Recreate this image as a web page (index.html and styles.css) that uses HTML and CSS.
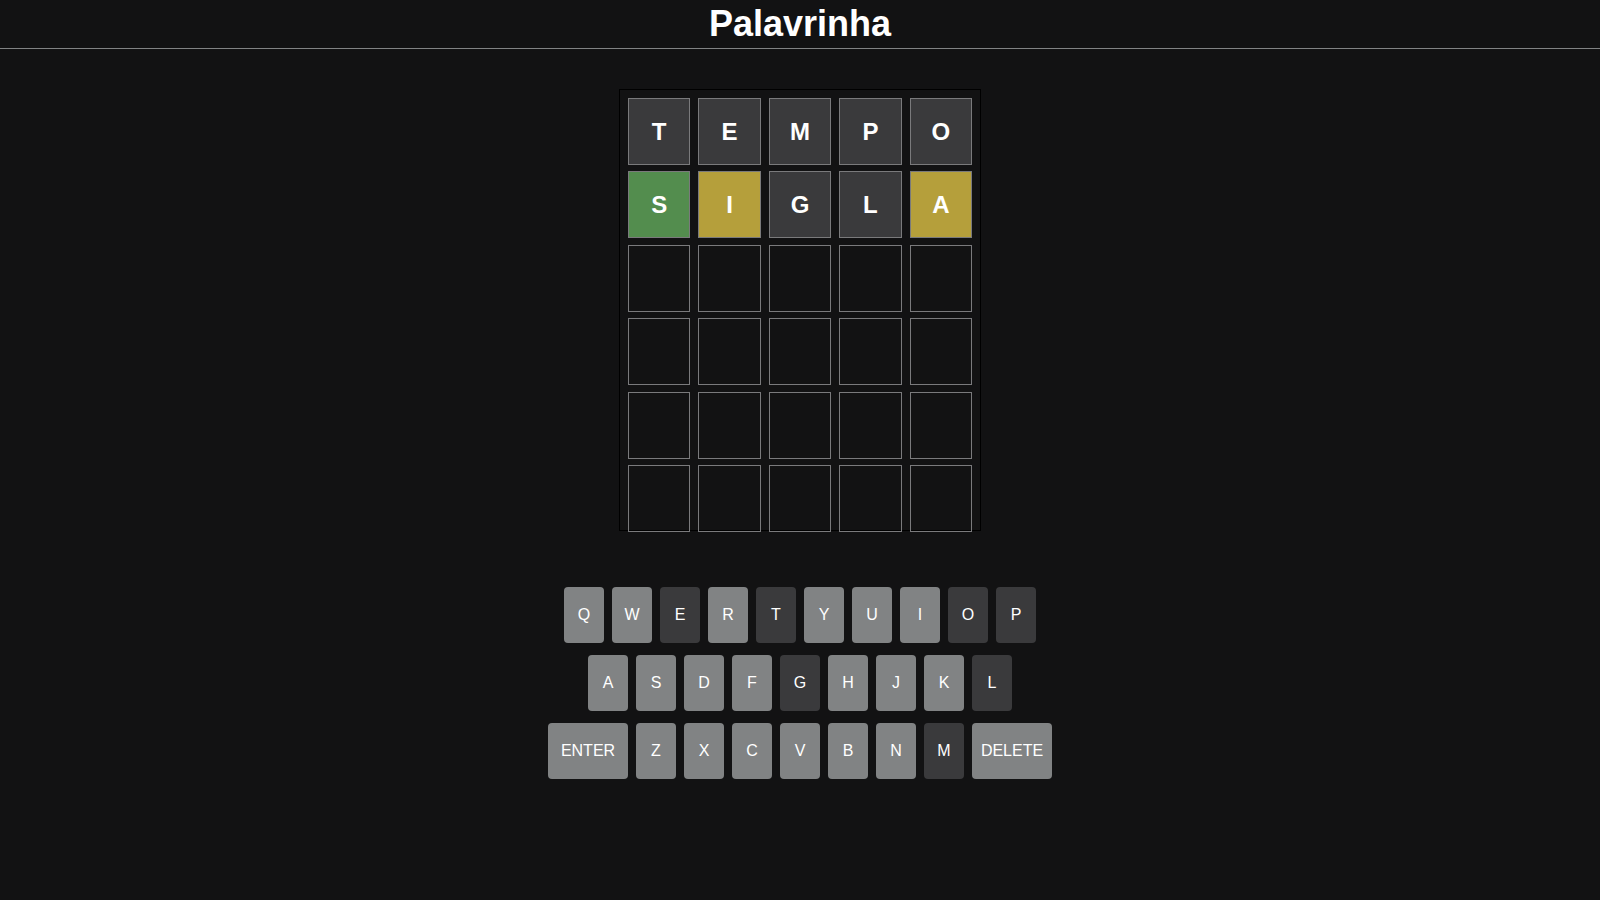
FILE: index.html
```html
<!DOCTYPE html>
<html lang="pt">
<head>
<meta charset="utf-8">
<title>Palavrinha</title>
<link rel="stylesheet" href="styles.css">
</head>
<body>
<header class="header"><h1 class="title">Palavrinha</h1></header>
<main class="main">
  <div class="board">
    <div class="tile dark">T</div><div class="tile dark">E</div><div class="tile dark">M</div><div class="tile dark">P</div><div class="tile dark">O</div>
    <div class="tile green">S</div><div class="tile yellow">I</div><div class="tile dark">G</div><div class="tile dark">L</div><div class="tile yellow">A</div>
    <div class="tile"></div><div class="tile"></div><div class="tile"></div><div class="tile"></div><div class="tile"></div>
    <div class="tile"></div><div class="tile"></div><div class="tile"></div><div class="tile"></div><div class="tile"></div>
    <div class="tile"></div><div class="tile"></div><div class="tile"></div><div class="tile"></div><div class="tile"></div>
    <div class="tile"></div><div class="tile"></div><div class="tile"></div><div class="tile"></div><div class="tile"></div>
  </div>
  <div class="keyboard">
    <div class="krow">
      <button class="key">Q</button><button class="key">W</button><button class="key used">E</button><button class="key">R</button><button class="key used">T</button><button class="key">Y</button><button class="key">U</button><button class="key">I</button><button class="key used">O</button><button class="key used">P</button>
    </div>
    <div class="krow">
      <button class="key">A</button><button class="key">S</button><button class="key">D</button><button class="key">F</button><button class="key used">G</button><button class="key">H</button><button class="key">J</button><button class="key">K</button><button class="key used">L</button>
    </div>
    <div class="krow">
      <button class="key wide">ENTER</button><button class="key">Z</button><button class="key">X</button><button class="key">C</button><button class="key">V</button><button class="key">B</button><button class="key">N</button><button class="key used">M</button><button class="key wide">DELETE</button>
    </div>
  </div>
</main>
</body>
</html>
```
FILE: styles.css
```css
html, body {
  margin: 0;
  padding: 0;
  background: #121213;
  color: #ffffff;
  font-family: "Liberation Sans", Arial, sans-serif;
}

.header {
  height: 48px;
  border-bottom: 1px solid #818384;
  display: flex;
  align-items: center;
  justify-content: center;
}

.title {
  margin: 0;
  font-size: 36px;
  font-weight: bold;
  line-height: 42px;
}

.main {
  display: flex;
  flex-direction: column;
  align-items: center;
  padding-top: 40px;
}

.board {
  box-sizing: border-box;
  width: 362px;
  height: 442px;
  padding: 8px;
  border: 1px solid #000000;
  display: grid;
  grid-template-columns: repeat(5, 1fr);
  grid-template-rows: repeat(6, 67px);
  column-gap: 8px;
  row-gap: 6.4px;
}

.tile {
  box-sizing: border-box;
  border: 1px solid #7a7a7c;
  display: flex;
  align-items: center;
  justify-content: center;
  font-size: 24px;
  font-weight: bold;
  color: #ffffff;
}

.tile.dark { background: #3a3a3c; }
.tile.green { background: #538d4e; }
.tile.yellow { background: #b59f3b; }

.keyboard {
  margin-top: 56px;
  display: flex;
  flex-direction: column;
  align-items: center;
  gap: 12px;
}

.krow {
  display: flex;
  gap: 8px;
}

.key {
  width: 40px;
  height: 56px;
  border: 0;
  border-radius: 4px;
  background: #818384;
  color: #ffffff;
  font-family: "Liberation Sans", Arial, sans-serif;
  font-size: 16px;
  padding: 0;
  display: flex;
  align-items: center;
  justify-content: center;
}

.key.wide { width: 80px; }
.key.used { background: #3a3a3c; }
```
